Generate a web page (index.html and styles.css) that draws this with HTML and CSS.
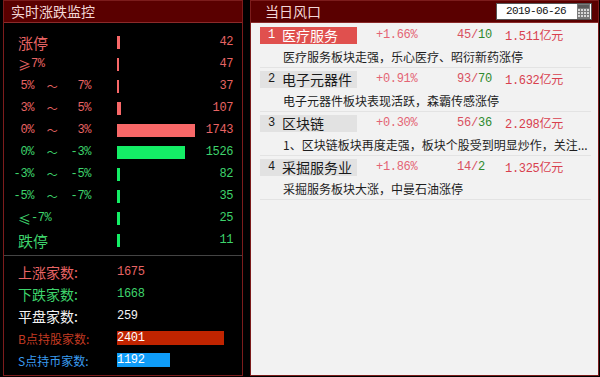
FILE: index.html
```html
<!DOCTYPE html>
<html lang="zh">
<head>
<meta charset="utf-8">
<link rel="stylesheet" href="styles.css">
</head>
<body>
<div class="wrap">
  <section class="panel left">
    <header class="phead">实时涨跌监控</header>
    <div class="rows">
      <div class="row up"><span class="lbl big">涨停</span><span class="barcell"><i class="bar" style="width:3px"></i></span><span class="val">42</span></div>
      <div class="row up"><span class="lbl cjk">≥<span class="mono">7%</span></span><span class="barcell"><i class="bar" style="width:2px"></i></span><span class="val">47</span></div>
      <div class="row up"><span class="lbl rng"><span class="a">5%</span><span class="t">～</span><span class="b">7%</span></span><span class="barcell"><i class="bar" style="width:2px"></i></span><span class="val">37</span></div>
      <div class="row up"><span class="lbl rng"><span class="a">3%</span><span class="t">～</span><span class="b">5%</span></span><span class="barcell"><i class="bar" style="width:4px"></i></span><span class="val">107</span></div>
      <div class="row up"><span class="lbl rng"><span class="a">0%</span><span class="t">～</span><span class="b">3%</span></span><span class="barcell"><i class="bar" style="width:78px"></i></span><span class="val">1743</span></div>
      <div class="row dn"><span class="lbl rng"><span class="a">0%</span><span class="t">～</span><span class="b">-3%</span></span><span class="barcell"><i class="bar" style="width:68px"></i></span><span class="val">1526</span></div>
      <div class="row dn"><span class="lbl rng"><span class="a">-3%</span><span class="t">～</span><span class="b">-5%</span></span><span class="barcell"><i class="bar" style="width:3px"></i></span><span class="val">82</span></div>
      <div class="row dn"><span class="lbl rng"><span class="a">-5%</span><span class="t">～</span><span class="b">-7%</span></span><span class="barcell"><i class="bar" style="width:3px"></i></span><span class="val">35</span></div>
      <div class="row dn"><span class="lbl cjk">≤<span class="mono">-7%</span></span><span class="barcell"><i class="bar" style="width:3px"></i></span><span class="val">25</span></div>
      <div class="row dn"><span class="lbl big">跌停</span><span class="barcell"><i class="bar" style="width:3px"></i></span><span class="val">11</span></div>
    </div>
    <div class="stats">
      <div class="srow up"><span class="slbl">上涨家数:</span><span class="sval">1675</span></div>
      <div class="srow dn"><span class="slbl">下跌家数:</span><span class="sval">1668</span></div>
      <div class="srow flat"><span class="slbl">平盘家数:</span><span class="sval">259</span></div>
      <div class="srow bpt"><span class="slbl small">B点持股家数:</span><span class="sbar" style="width:107px">2401</span></div>
      <div class="srow spt"><span class="slbl small">S点持币家数:</span><span class="sbar" style="width:53px">1192</span></div>
    </div>
  </section>

  <section class="panel right">
    <header class="phead rhead">
      <span class="rtitle">当日风口</span>
      <span class="datebox">
        <span class="date">2019-06-26</span>
        <svg class="cal" width="13" height="15" viewBox="0 0 13 15">
          <rect x="0" y="0" width="13" height="15" fill="#7a7a7a"/>
          <rect x="1" y="1" width="11" height="3" fill="#5a5a5a"/>
          <g fill="#d8d8d8">
            <rect x="1" y="5" width="2" height="2"/><rect x="4" y="5" width="2" height="2"/><rect x="7" y="5" width="2" height="2"/><rect x="10" y="5" width="2" height="2"/>
            <rect x="1" y="8" width="2" height="2"/><rect x="4" y="8" width="2" height="2"/><rect x="7" y="8" width="2" height="2"/><rect x="10" y="8" width="2" height="2"/>
            <rect x="1" y="11" width="2" height="2"/><rect x="4" y="11" width="2" height="2"/><rect x="7" y="11" width="2" height="2"/><rect x="10" y="11" width="2" height="2"/>
          </g>
        </svg>
      </span>
    </header>
    <div class="list">
      <div class="item">
        <div class="top"><span class="tag hot"><span class="no">1</span>医疗服务</span><span class="pct">+1.66%</span><span class="cnt"><b class="r">45</b><b class="r">/</b><b class="g">10</b></span><span class="amt">1.511亿元</span></div>
        <div class="desc">医疗服务板块走强，乐心医疗、昭衍新药涨停</div>
      </div>
      <div class="item">
        <div class="top"><span class="tag"><span class="no">2</span>电子元器件</span><span class="pct">+0.91%</span><span class="cnt"><b class="r">93</b><b class="r">/</b><b class="g">70</b></span><span class="amt">1.632亿元</span></div>
        <div class="desc">电子元器件板块表现活跃，森霸传感涨停</div>
      </div>
      <div class="item">
        <div class="top"><span class="tag"><span class="no">3</span>区块链</span><span class="pct">+0.30%</span><span class="cnt"><b class="r">56</b><b class="r">/</b><b class="g">36</b></span><span class="amt">2.298亿元</span></div>
        <div class="desc">1、区块链板块再度走强，板块个股受到明显炒作，关注...</div>
      </div>
      <div class="item">
        <div class="top"><span class="tag"><span class="no">4</span>采掘服务业</span><span class="pct">+1.86%</span><span class="cnt"><b class="r">14</b><b class="r">/</b><b class="g">2</b></span><span class="amt">1.325亿元</span></div>
        <div class="desc">采掘服务板块大涨，中曼石油涨停</div>
      </div>
    </div>
  </section>
</div>
</body>
</html>
```

FILE: styles.css
```css
html, body {
  margin: 0;
  padding: 0;
  background: #000;
}
body {
  width: 600px;
  height: 377px;
  overflow: hidden;
  font-family: "Noto Sans CJK SC", "Liberation Sans", sans-serif;
}
.wrap {
  display: flex;
  gap: 7px;
  padding: 0 1px 0 3px;
  height: 376px;
}
.panel {
  box-sizing: border-box;
  height: 376px;
  border: 1px solid #7c1c1c;
  display: flex;
  flex-direction: column;
}
.left {
  width: 240px;
  background: #000;
}
.right {
  flex: 1;
  background: #f2f2f2;
}
.phead {
  height: 21px;
  line-height: 21px;
  background: #5a0000;
  border-bottom: 1px solid #8a2a2a;
  color: #f2d6d6;
  font-size: 14px;
  padding-left: 7px;
  flex: none;
}
.rows {
  padding-top: 8px;
}
.row {
  display: grid;
  grid-template-columns: 113px 1fr auto;
  align-items: center;
  height: 22px;
  padding-right: 9px;
}
.up { color: #e86464; }
.dn { color: #3ed46c; }
.lbl {
  display: flex;
  align-items: center;
  font-size: 12px;
  padding-left: 14px;
}
.lbl.big {
  font-size: 15px;
}
.lbl.cjk {
  font-size: 13px;
}
.mono, .rng, .val, .sval, .pct, .cnt, .amt, .date, .no {
  font-family: "Liberation Mono", "Noto Sans CJK SC", monospace;
}
.mono {
  font-size: 12px;
  letter-spacing: -0.4px;
}
.lbl.rng {
  padding-left: 0;
  letter-spacing: -0.4px;
}
.rng .a {
  width: 30px;
  text-align: right;
}
.rng .t {
  width: 36px;
  text-align: center;
  font-family: "Noto Sans CJK SC", sans-serif;
  font-size: 11px;
}
.rng .b {
  width: 21px;
  text-align: right;
  white-space: nowrap;
}
.barcell {
  display: flex;
  align-items: center;
  height: 22px;
}
.bar {
  display: block;
  height: 13px;
}
.up .bar { background: #f86868; }
.dn .bar { background: #14ee66; }
.val {
  font-size: 12px;
  letter-spacing: -0.4px;
  text-align: right;
}
.stats {
  border-top: 1px solid #444;
  margin-top: 4px;
  padding-top: 5px;
}
.srow {
  display: grid;
  grid-template-columns: 113px 1fr;
  align-items: center;
  height: 22px;
}
.slbl {
  font-size: 14px;
  padding-left: 14px;
}
.slbl.small {
  font-size: 12px;
  padding-left: 14px;
}
.sval {
  font-size: 12px;
  letter-spacing: -0.3px;
}
.flat { color: #f4f4f4; }
.bpt .slbl { color: #c33a22; }
.spt .slbl { color: #3a9cf0; }
.sbar {
  display: block;
  height: 14px;
  line-height: 14px;
  color: #fff;
  font-family: "Liberation Mono", monospace;
  font-size: 12px;
  letter-spacing: -0.3px;
}
.bpt .sbar { background: #c02400; }
.spt .sbar { background: #0f9cf8; }

/* right */
.rhead {
  display: flex;
  align-items: center;
  justify-content: space-between;
  padding-left: 14px;
  padding-right: 6px;
}
.datebox {
  display: flex;
  align-items: center;
  justify-content: space-between;
  width: 96px;
  height: 17px;
  box-sizing: border-box;
  background: #fff;
  border: 1px solid #555;
  padding: 0 1px 0 9px;
}
.date {
  font-size: 11px;
  letter-spacing: -0.6px;
  color: #111;
  line-height: 15px;
}
.cal { display: block; }
.list {
  padding: 1px 7px 0 9px;
}
.item {
  border-bottom: 1px solid #e3e3e3;
}
.top {
  display: grid;
  grid-template-columns: 97px 19px 81px 48px 1fr;
  align-items: center;
  height: 22px;
  font-size: 12px;
}
.tag {
  grid-column: 1;
  display: flex;
  align-items: center;
  height: 17px;
  background: #e2e2e2;
  color: #1a1a1a;
  font-size: 14px;
  padding-left: 8px;
  white-space: nowrap;
}
.tag.hot {
  background: #e0504e;
  color: #fff;
}
.no {
  font-size: 12px;
  width: 14px;
}
.pct {
  grid-column: 3;
  color: #e46474;
  letter-spacing: -0.3px;
}
.cnt {
  grid-column: 4;
  letter-spacing: -0.2px;
}
.cnt b { font-weight: normal; }
.r { color: #d85060; }
.g { color: #2e8a2e; }
.amt {
  grid-column: 5;
  color: #d8404e;
  letter-spacing: -0.3px;
}
.desc {
  height: 21px;
  line-height: 21px;
  font-size: 12px;
  color: #1e1e1e;
  padding-left: 23px;
  white-space: nowrap;
}
```
